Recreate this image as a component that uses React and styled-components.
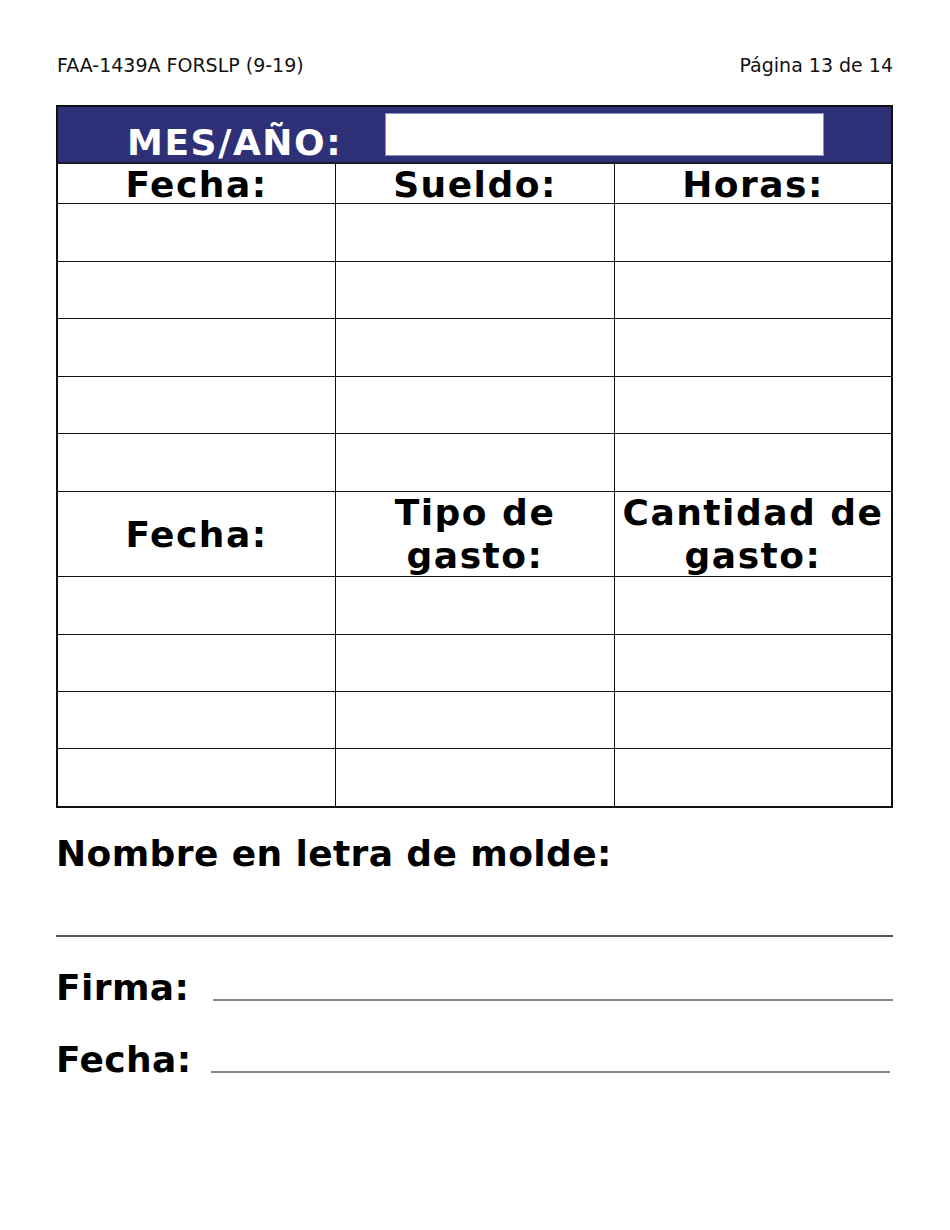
import React from "react";
import styled, {createGlobalStyle} from "styled-components";

const GlobalStyle = createGlobalStyle`
  html, body {
    margin: 0;
    padding: 0;
    background: #ffffff;
  }
  body {
    font-family: "DejaVu Sans", Verdana, sans-serif;
    color: #000;
  }
`

const Page = styled.div`
  width: 950px;
  height: 1230px;
  padding: 0 57px 0 56px;
  box-sizing: border-box;
`

const TopLine = styled.div`
  display: flex;
  justify-content: space-between;
  align-items: center;
  padding: 51px 0 0 1px;
  height: 27px;
  font-size: 19px;
  color: #111;
`

const Sheet = styled.div`
  margin-top: 27px;
  border: 2px solid #111;
`

const Band = styled.div`
  display: flex;
  align-items: flex-end;
  height: 55px;
  background: #2e3178;
  border-bottom: 2px solid #1a1a2a;
`

const BandLabel = styled.div`
  width: 257px;
  padding-left: 69px;
  box-sizing: border-box;
  color: #fff;
  font-weight: bold;
  font-size: 36px;
  line-height: 40px;
  letter-spacing: 1.6px;
  white-space: nowrap;
  margin-bottom: -1px;
`

const BandInput = styled.div`
  width: 439px;
  height: 43px;
  margin-left: 70px;
  margin-bottom: 6px;
  background: #fff;
  border: 1px solid #8c8fbf;
  box-sizing: border-box;
`

const Grid = styled.div`
  display: grid;
  grid-template-columns: 278px 279px 1fr;
`

const Cell = styled.div`
  height: ${p => p.$h}px;
  box-sizing: border-box;
  border-bottom: ${p => (p.$last ? "none" : "1px solid #111")};
  border-right: ${p => (p.$col < 2 ? "1px solid #111" : "none")};
  display: flex;
  align-items: center;
  justify-content: center;
  text-align: center;
  font-weight: bold;
  font-size: 36px;
  line-height: 43px;
  letter-spacing: 1.5px;
  white-space: nowrap;
  padding-top: ${p => (p.$h === 40 ? 2 : 0)}px;
`

const Heading = styled.div`
  margin-top: 24px;
  font-weight: bold;
  font-size: 36px;
  line-height: 44px;
  letter-spacing: 0.4px;
`

const Rule = styled.div`
  margin-top: 59px;
  height: 0;
  border-top: 2px solid #555;
`

const SignRow = styled.div`
  display: flex;
  align-items: flex-end;
  margin-top: ${p => p.$top}px;
  padding-right: ${p => p.$pr}px;
`

const SignLabel = styled.div`
  font-weight: bold;
  font-size: 36px;
  line-height: 40px;
  letter-spacing: 0.4px;
  white-space: nowrap;
`

const SignLine = styled.div`
  flex: 1;
  margin-left: ${p => p.$ml}px;
  margin-bottom: 7px;
  border-bottom: 2px solid #888;
`

const headerOne = ["Fecha:", "Sueldo:", "Horas:"];
const headerTwo = [
    "Fecha:",
    <>Tipo de<br/>gasto:</>,
    <>Cantidad de<br/>gasto:</>,
];

const rowHeights = [58, 57, 58, 57, 58];
const lowerHeights = [58, 57, 57, 57];

const renderRow = (cells, h, key, last) =>
    cells.map((c, i) => (
        <Cell key={`${key}-${i}`} $h={h} $col={i} $last={last}>{c}</Cell>
    ));

export default function App() {
    return (
        <>
            <GlobalStyle/>
            <Page>
                <TopLine>
                    <span>FAA-1439A FORSLP (9-19)</span>
                    <span>Página 13 de 14</span>
                </TopLine>

                <Sheet>
                    <Band>
                        <BandLabel>MES/AÑO:</BandLabel>
                        <BandInput/>
                    </Band>
                    <Grid>
                        {renderRow(headerOne, 40, "h1")}
                        {rowHeights.map((h, r) => renderRow(["", "", ""], h, `a${r}`))}
                        {renderRow(headerTwo, 85, "h2")}
                        {lowerHeights.map((h, r) =>
                            renderRow(["", "", ""], h, `b${r}`, r === lowerHeights.length - 1))}
                    </Grid>
                </Sheet>

                <Heading>Nombre en letra de molde:</Heading>
                <Rule/>

                <SignRow $top={31} $pr={0}>
                    <SignLabel>Firma:</SignLabel>
                    <SignLine $ml={24}/>
                </SignRow>
                <SignRow $top={32} $pr={3}>
                    <SignLabel>Fecha:</SignLabel>
                    <SignLine $ml={19}/>
                </SignRow>
            </Page>
        </>
    );
}
